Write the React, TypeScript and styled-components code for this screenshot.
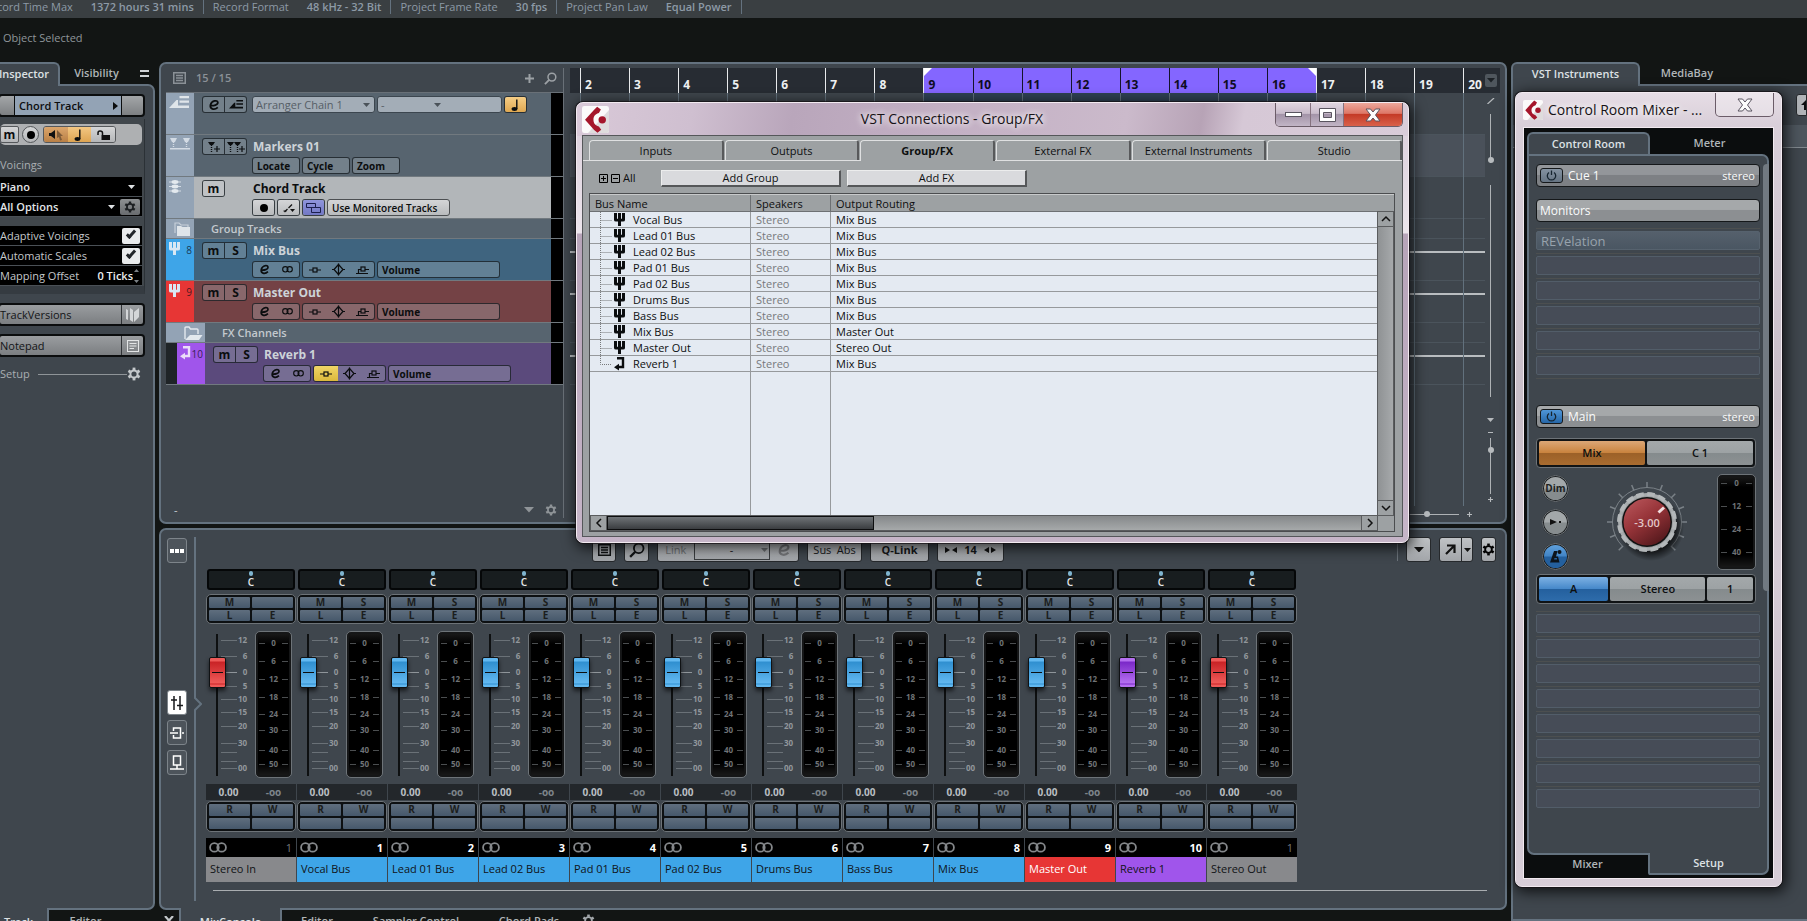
import React from "react";
import styled, { createGlobalStyle, css } from "styled-components";

const line = "#64727f";
const panel = "#3f464d";
const black = "#121514";

const GlobalStyle = createGlobalStyle`
  *, *::before, *::after { box-sizing: border-box; }
  html, body, #root { height: 100%; }
  body {
    margin: 0;
    overflow: hidden;
    background: ${black};
    font-family: "Open Sans", "Noto Sans", sans-serif;
    font-size: 11px;
    line-height: 16px;
    color: #c9ced2;
  }
  button, input, select { font: inherit; color: inherit; margin: 0; }
  button { padding: 0; border: 0; background: none; }
  svg { display: block; flex: none; }
`;

const Desktop = styled.div`
  position: relative;
  display: flex;
  flex-direction: column;
  height: 100vh;
  overflow: hidden;
`;

/* ---------- icons ---------- */

type IconProps = { c?: string; s?: number };

const Gear = ({ c = "#000", s = 14 }: IconProps) => (
  <svg width={s} height={s} viewBox="-7 -7 14 14" aria-hidden="true">
    <circle r="3.6" fill="none" stroke={c} strokeWidth="2" />
    {[0, 60, 120, 180, 240, 300].map((a) => (
      <path key={a} d="M0 -4 V-6.4" stroke={c} strokeWidth="2.8" transform={`rotate(${a})`} />
    ))}
  </svg>
);

const EIcon = ({ c = "#0b0d0f", s = 12 }: IconProps) => (
  <svg width={s} height={s} viewBox="0 0 12 12" aria-hidden="true">
    <path d="M2.4 6.6 C5.5 7 10 6 9.8 3.4 C9.4 .8 4 1.2 2.5 5.8 C1.5 10.2 6.2 11.6 9.8 8.4" fill="none" stroke={c} strokeWidth="1.8" />
  </svg>
);

const StereoRings = ({ c = "#0b0d0f", w = 10 }: { c?: string; w?: number }) => (
  <svg width={w} height={w * 0.6} viewBox="0 0 20 12" aria-hidden="true">
    <circle cx="6" cy="6" r="4.8" fill="none" stroke={c} strokeWidth="2" />
    <circle cx="14" cy="6" r="4.8" fill="none" stroke={c} strokeWidth="2" />
  </svg>
);

const Fork = ({ c = "#0b0d0f" }: IconProps) => (
  <svg width="11" height="13" viewBox="0 0 11 13" aria-hidden="true">
    <path d="M0 0H3V5Q3 6 4 6V0H7V6Q8 6 8 5V0H11V7Q11 8.500 9 8.500H7V13H4V8.500H2Q0 8.500 0 7Z" fill={c} />
  </svg>
);

const ReturnArrow = ({ c = "#0b0d0f" }: IconProps) => (
  <svg width="11" height="14" viewBox="0 0 11 14" aria-hidden="true">
    <path d="M3 1.200H9V10H4" fill="none" stroke={c} strokeWidth="2.400" />
    <path d="M0 10.200L5 6.800V13.600Z" fill={c} />
  </svg>
);

const Arranger = ({ c = "#0b0d0f", w = 14 }: { c?: string; w?: number }) => (
  <svg width={w} height={w * 0.6} viewBox="0 0 20 12" aria-hidden="true">
    <path d="M0 12L7.500 4H9V9.500H20V12Z M10.500 0H20V2.200H10.500Z M10.500 4.600H20V6.800H10.500Z" fill={c} />
  </svg>
);

const MarkerPins = ({ c = "#d3dbe4" }: IconProps) => (
  <svg width="22" height="12" viewBox="0 0 22 12" aria-hidden="true">
    <path d="M1 0H8L6 4H3Z M14 0H21L19 4H16Z M1 10H21V11.500H1Z" fill={c} />
    <path d="M4.500 4V10 M17.500 4V10" stroke={c} strokeWidth="1.400" strokeDasharray="1 1" />
  </svg>
);

const PinPlus = ({ two = false }: { two?: boolean }) => (
  <svg width={two ? 18 : 13} height="10" viewBox={two ? "0 0 18 10" : "0 0 13 10"} aria-hidden="true">
    <path d={two ? "M0 0H7L5 3H2Z M7 0H14L12 3H9Z" : "M1 0H8L6 3H3Z"} fill="#0b0d0f" />
    <path d={two ? "M3.500 3V10 M10.500 3V10" : "M4.500 3V10"} stroke="#0b0d0f" strokeDasharray="1 1" strokeWidth="1.400" />
    <path d={two ? "M12 7H18 M15 4V10" : "M7 7H13 M10 4V10"} stroke="#0b0d0f" strokeWidth="1.200" />
  </svg>
);

const ChordIcon = () => (
  <svg width="12" height="13" viewBox="0 0 12 13" aria-hidden="true">
    <path d="M0 2H12 M0 6.500H12 M0 11H12" stroke="#d3dbe4" strokeWidth="1" />
    <ellipse cx="6" cy="2" rx="3.400" ry="1.900" fill="#e3e9ee" />
    <ellipse cx="6" cy="6.500" rx="3.400" ry="1.900" fill="#e3e9ee" />
    <ellipse cx="6" cy="11" rx="3.400" ry="1.900" fill="#e3e9ee" />
  </svg>
);

const Folder = ({ open = false }: { open?: boolean }) => (
  <svg width="19" height="15" viewBox="0 0 19 15" aria-hidden="true">
    {open ? (
      <>
        <path d="M1 13V2Q1 1 2 1H5L6.500 3H13Q14 3 14 4V8" fill="none" stroke="#e3e9ee" strokeWidth="1.400" />
        <path d="M1 14L6 9H18.500L15 14Z" fill="#e3e9ee" />
      </>
    ) : (
      <>
        <path d="M2 11V1H6L8 3H15V5" fill="none" stroke="#c7d0da" strokeWidth="1.200" />
        <path d="M4 14V4H8L9.500 5H17V14Z" fill="#dfe5ea" />
      </>
    )}
  </svg>
);

const Note = () => (
  <svg width="10" height="12" viewBox="0 0 10 12" aria-hidden="true">
    <ellipse cx="3.500" cy="10" rx="2.900" ry="1.900" fill="#0b0d0f" />
    <path d="M5.800 10V0.500" stroke="#0b0d0f" strokeWidth="1.400" />
  </svg>
);

const InsertIcon = () => (
  <svg width="12" height="6" viewBox="0 0 12 6" aria-hidden="true">
    <path d="M0 3H4 M8 3H12" stroke="#0b0d0f" strokeWidth="1.200" />
    <rect x="4" y="1" width="4" height="4" fill="none" stroke="#0b0d0f" strokeWidth="1.200" />
  </svg>
);
const EqIcon = () => (
  <svg width="13" height="13" viewBox="0 0 13 13" aria-hidden="true">
    <path d="M6.500 0.500V12.500 M0 6.500H2 M11 6.500H13" stroke="#0b0d0f" strokeWidth="1.200" />
    <path d="M2 6.500L6.500 1.500L11 6.500L6.500 11.500Z" fill="none" stroke="#0b0d0f" strokeWidth="1.200" />
  </svg>
);
const SendIcon = () => (
  <svg width="13" height="8" viewBox="0 0 13 8" aria-hidden="true">
    <path d="M0 7.500H12 M2.500 7V3.500H5 M9 3.500H13" fill="none" stroke="#0b0d0f" strokeWidth="1.200" />
    <rect x="5" y="1" width="4" height="4" fill="none" stroke="#0b0d0f" strokeWidth="1.200" />
  </svg>
);

const Search = ({ c = "#9ca1a5", s = 14 }: IconProps) => (
  <svg width={s} height={s} viewBox="0 0 14 14" aria-hidden="true">
    <circle cx="8.500" cy="5.500" r="4.200" fill="none" stroke={c} strokeWidth="1.600" />
    <path d="M5.500 8.500L1 13" stroke={c} strokeWidth="2" />
  </svg>
);

const List = ({ c = "#9ca1a5" }: IconProps) => (
  <svg width="13" height="12" viewBox="0 0 13 12" aria-hidden="true">
    <rect x="0.750" y="0.750" width="11.500" height="10.500" fill="none" stroke={c} strokeWidth="1.500" />
    <path d="M3 3.500H10 M3 6H10 M3 8.500H10" stroke={c} strokeWidth="1.300" />
  </svg>
);

const Down = ({ c = "#dfe2e4", w = 7 }: { c?: string; w?: number }) => (
  <svg width={w} height={w / 2 + 0.5} viewBox="0 0 8 4" preserveAspectRatio="none" aria-hidden="true">
    <path d="M0 0H8L4 4Z" fill={c} />
  </svg>
);

const Plus = ({ c = "#9ca1a5", s = 9, w = 2 }: { c?: string; s?: number; w?: number }) => (
  <svg width={s} height={s} viewBox="0 0 9 9" aria-hidden="true">
    <path d="M4.500 0V9 M0 4.500H9" stroke={c} strokeWidth={w} />
  </svg>
);

const Power = () => (
  <svg width="11" height="11" viewBox="0 0 11 11" aria-hidden="true">
    <path d="M3 2.400A4.200 4.200 0 1 0 8 2.400 M5.500 0.500V5" fill="none" stroke="#16242f" strokeWidth="1.300" />
  </svg>
);

const Brand = ({ s }: { s: number }) => (
  <svg width={s} height={s} viewBox="0 0 80 80" aria-hidden="true">
    <rect width="80" height="80" rx="7" fill="#fbfafa" />
    <path d="M80 12V73Q80 80 73 80H18Z" fill="#dfdcdd" />
    <path d="M9 41L36 11L45 2L56 10L50 21C37 25 34 33 34 41C34 49 37 57 50 61L57 70L46 79L36 71Z" fill="#a5162b" />
    <circle cx="60" cy="41" r="11" fill="#a5162b" />
  </svg>
);

/* ---------- top lines ---------- */

const InfoLine = styled.header`
  display: flex;
  flex: none;
  height: 18px;
  margin-left: -25px;
  background: #3a3f42;
  color: #8d9aa6;
  line-height: 13px;
`;
const InfoItem = styled.div`
  display: flex;
  gap: 18px;
  height: 14px;
  padding: 0 9px;
  white-space: nowrap;
  border-right: 1px solid ${line};
  b { font-weight: 600; }
`;
const StatusLine = styled.div`
  flex: none;
  height: 44px;
  padding: 12px 3px;
  color: #8f959a;
`;

/* ---------- page columns and tabbed panels ---------- */

const Main = styled.main`
  flex: 1;
  min-height: 0;
  display: grid;
  grid-template-columns: 155px minmax(0, 1fr) 296px;
  gap: 4px;
`;
const Column = styled.div<{ $shift?: boolean }>`
  display: flex;
  flex-direction: column;
  min-width: 0;
  min-height: 0;
  ${(p) => p.$shift && css`margin-left: -12px;`}
`;
const Tabs = styled.div`
  display: flex;
  flex: none;
  height: 22px;
`;
const Tab = styled.button<{ $on?: boolean; $w: number; $low?: boolean }>`
  position: relative;
  flex: none;
  width: ${(p) => p.$w}px;
  height: 24px;
  padding-bottom: 2px;
  font-weight: 600;
  color: ${(p) => (p.$on ? "#dde1e4" : "#b0b5b8")};
  ${(p) =>
    p.$on &&
    css`
      background: ${panel};
      border: 2px solid ${line};
      ${p.$low ? "border-top: 0; border-radius: 0 0 5px 5px; margin-top: -2px; height: 26px; padding: 4px 0 0;" : "border-bottom: 0; border-radius: 6px 6px 0 0;"}
    `}
`;
const TabTools = styled.div`
  display: flex;
  align-items: center;
  margin-left: auto;
  padding-right: 6px;
`;
const Panel = styled.section<{ $grow?: boolean; $edge?: boolean }>`
  display: flex;
  flex-direction: column;
  min-height: 0;
  background: ${panel};
  border: 2px solid ${line};
  border-radius: 7px;
  ${(p) => p.$grow && css`flex: 1;`}
  ${(p) => p.$edge && css`border-right: 0; border-radius: 0;`}
`;
const Footer = styled.div`
  display: flex;
  flex: none;
  height: 24px;
  margin-bottom: -13px;
`;
const CloseMark = styled.button`
  width: 20px;
  height: 20px;
  display: grid;
  place-items: center;
`;

/* ---------- inspector ---------- */

const InspBody = styled.div`
  display: flex;
  flex-direction: column;
  padding: 8px 8px 0;
`;
const HeadBar = styled.div`
  display: flex;
  height: 23px;
  border: 2px solid #0b0d0e;
  border-radius: 4px;
  background: linear-gradient(#a3a6a8, #7d8083);
`;
const HeadName = styled.button`
  flex: 1;
  display: flex;
  align-items: center;
  justify-content: space-between;
  margin: 0 21px 0 14px;
  padding: 0 3px 0 4px;
  background: #93a3b5;
  border: solid #0b0d0e;
  border-width: 0 1px;
  color: #0b0d0e;
  font-weight: 600;
`;
const InspCard = styled.div`
  margin: 2px 0 9px;
  padding: 5px 2px 0 2px;
  border-right: 1px solid #2b3136;
  border-bottom: 8px solid #353b41;
  background: #41474c;
`;
const ToolBar = styled.div`
  display: flex;
  align-items: center;
  gap: 3px;
  height: 21px;
  background: #aeb0b2;
  border-radius: 5px;
`;
const cellLook = css`
  display: grid;
  place-items: center;
  background: linear-gradient(#d5d6d7, #b4b6b8);
`;
const SmallKey = styled.button<{ $round?: boolean }>`
  ${cellLook}
  width: ${(p) => (p.$round ? 17 : 19)}px;
  height: 17px;
  border: 1px solid #55585b;
  border-radius: ${(p) => (p.$round ? 9 : 2)}px;
  font-weight: 700;
  font-size: 12px;
  line-height: 12px;
  color: #0b0d0e;
`;
const KeyTrio = styled.div`
  display: grid;
  grid-template-columns: 1fr 1fr 1fr;
  width: 73px;
  height: 17px;
  margin-left: 1px;
  border: 1px solid #55585b;
  border-radius: 3px;
  overflow: hidden;
`;
const TrioKey = styled.button<{ $bg?: string }>`
  ${cellLook}
  ${(p) => p.$bg && css`background: ${p.$bg};`}
`;
const Caption = styled.div`
  height: 32px;
  padding: 12px 0 0 0;
  color: #a9aeb2;
`;
const BlackList = styled.div`
  background: #000;
  & + & { margin-top: 9px; }
`;
const BlackRow = styled.label`
  display: flex;
  align-items: center;
  justify-content: space-between;
  height: 20px;
  padding-right: 2px;
  border-bottom: 1px solid #4a5056;
  color: #c4c8cb;
  white-space: nowrap;
`;
const Stack = styled.span<{ $w?: number; $h?: number; $pad?: number }>`
  display: grid;
  align-items: center;
  ${(p) => (p.$w ? css`width: ${p.$w}px;` : css`flex: 1;`)}
  ${(p) => p.$h && css`height: ${p.$h}px;`}
  > * { grid-area: 1 / 1; }
  > svg { justify-self: end; margin-right: ${(p) => p.$pad ?? 5}px; pointer-events: none; }
`;
const BlackSelect = styled.select`
  appearance: none;
  width: 100%;
  height: 18px;
  padding: 0;
  border: 0;
  background: none;
  color: #e3e6e8;
  font-weight: 600;
  option { color: #000; }
`;
const GearKey = styled.button`
  width: 20px;
  height: 16px;
  display: grid;
  place-items: center;
  border-radius: 2px;
  background: linear-gradient(#8d9092, #696c6f);
`;
const Check = styled.input`
  appearance: none;
  width: 18px;
  height: 16px;
  border-radius: 2px;
  background: #e9ebec;
  display: grid;
  place-items: center;
  &::after {
    content: "";
    width: 10px;
    height: 5px;
    border: solid #22262a;
    border-width: 0 0 3px 3px;
    transform: translateY(-2px) rotate(-48deg);
  }
`;
const Ticks = styled.input`
  width: 48px;
  padding: 0;
  margin-left: auto;
  border: 0;
  background: none;
  color: #eceeef;
  font-weight: 600;
  text-align: right;
`;
const GrayBar = styled.button`
  display: flex;
  align-items: center;
  justify-content: space-between;
  height: 23px;
  margin-bottom: 8px;
  border: 2px solid #0b0d0e;
  border-radius: 4px;
  background: linear-gradient(#9a9da0, #7b7e81);
  color: #131517;
  span { width: 22px; height: 100%; border-left: 1px solid #303336; display: grid; place-items: center; }
`;
const SetupRow = styled.div`
  display: flex;
  align-items: center;
  gap: 8px;
  height: 18px;
  padding: 0 4px 0 2px;
  color: #a9aeb2;
  i { flex: 1; height: 1px; background: #8f9498; }
  svg { margin-left: -8px; }
`;

function Inspector() {
  return (
    <Column $shift>
      <Tabs>
        <Tab $on $w={72}>Inspector</Tab>
        <Tab $w={73}>Visibility</Tab>
        <TabTools>
          <svg width="9" height="7" viewBox="0 0 9 7" aria-hidden="true"><path d="M0 1H9 M0 6H9" stroke="#cfd3d6" strokeWidth="2" /></svg>
        </TabTools>
      </Tabs>
      <Panel $grow>
        <InspBody>
          <HeadBar>
            <HeadName>
              Chord Track
              <svg width="5" height="8" viewBox="0 0 5 8" aria-hidden="true"><path d="M0 0L5 4L0 8Z" fill="#0b0d0e" /></svg>
            </HeadName>
          </HeadBar>
          <InspCard>
            <ToolBar>
              <SmallKey>m</SmallKey>
              <SmallKey $round aria-label="Record enable">
                <svg width="8" height="8" viewBox="0 0 8 8"><circle cx="4" cy="4" r="4" fill="#000" /></svg>
              </SmallKey>
              <KeyTrio>
                <TrioKey $bg="linear-gradient(#dba56b,#b98046)" aria-label="Acoustic feedback">
                  <svg width="14" height="12" viewBox="0 0 14 12"><path d="M0 4H2L6 1V10L2 7H0Z" fill="#111" /><path d="M8 1L14 7L11.500 7L13 11L11 11.500L10 8L8 9Z" fill="#7d5b39" /></svg>
                </TrioKey>
                <TrioKey $bg="linear-gradient(#f3c783,#dda452)" aria-label="Musical mode"><Note /></TrioKey>
                <TrioKey aria-label="Lock">
                  <svg width="13" height="10" viewBox="0 0 13 10"><path d="M1 5V3Q1 1 3 1Q5.500 1 5.500 3V5" fill="none" stroke="#111" strokeWidth="1.500" /><path d="M4.500 5H13V10H4.500Z" fill="#111" /></svg>
                </TrioKey>
              </KeyTrio>
            </ToolBar>
            <Caption>Voicings</Caption>
            <BlackList>
              <BlackRow>
                <Stack>
                  <BlackSelect aria-label="Voicing library"><option>Piano</option></BlackSelect>
                  <Down />
                </Stack>
              </BlackRow>
              <BlackRow as="div">
                <Stack>
                  <BlackSelect aria-label="Voicing options"><option>All Options</option></BlackSelect>
                  <Down />
                </Stack>
                <GearKey aria-label="Configure voicings"><Gear c="#1c1f22" s={12} /></GearKey>
              </BlackRow>
            </BlackList>
            <BlackList>
              <BlackRow>Adaptive Voicings<Check type="checkbox" defaultChecked /></BlackRow>
              <BlackRow>Automatic Scales<Check type="checkbox" defaultChecked /></BlackRow>
              <BlackRow>
                Mapping Offset
                <Ticks defaultValue="0 Ticks" />
                <svg width="7" height="14" viewBox="0 0 7 14" aria-hidden="true"><path d="M1 3L3.500 0L6 3Z M1 11L3.500 14L6 11Z" fill="#7b8186" /></svg>
              </BlackRow>
            </BlackList>
          </InspCard>
          <GrayBar>
            TrackVersions
            <span>
              <svg width="13" height="14" viewBox="0 0 13 14" aria-hidden="true"><path d="M0 1L2 2V12L0 11Z M4 0L7 2V14L4 12Z M8 4L13 0V9L8 14Z" fill="#d4d6d8" /></svg>
            </span>
          </GrayBar>
          <GrayBar>
            Notepad
            <span>
              <svg width="12" height="12" viewBox="0 0 12 12" aria-hidden="true"><rect x="0.500" y="0.500" width="11" height="11" fill="none" stroke="#e3e5e6" /><path d="M2.500 3.500H9.500 M2.500 6H9.500 M2.500 8.500H7" stroke="#e3e5e6" /></svg>
            </span>
          </GrayBar>
          <SetupRow>Setup<i /><Gear c="#c5c9cc" s={14} /></SetupRow>
        </InspBody>
      </Panel>
      <Footer>
        <Tab $on $low $w={61}>Track</Tab>
        <Tab $w={73}>Editor</Tab>
      </Footer>
    </Column>
  );
}

/* ---------- track list ---------- */

const Project = styled.div`
  display: flex;
  flex: 1;
  min-height: 0;
  padding: 4px 5px 4px 5px;
`;
const TrackList = styled.div`
  display: flex;
  flex-direction: column;
  flex: none;
  width: 398px;
  border-right: 1px solid #697077;
`;
const ListHead = styled.div`
  display: flex;
  align-items: center;
  gap: 10px;
  height: 25px;
  padding: 0 6px 4px 7px;
  border-bottom: 1px solid #697077;
  color: #8b9197;
  font-weight: 600;
  button:first-of-type { margin-left: auto; }
`;
const ListFoot = styled.div`
  display: flex;
  align-items: center;
  gap: 11px;
  margin-top: auto;
  padding: 0 6px 0 8px;
  color: #c9ced2;
  span { margin-right: auto; }
`;
const Track = styled.div<{ $bg: string; $h?: number; $indent?: boolean }>`
  display: flex;
  flex: none;
  height: ${(p) => p.$h ?? 42}px;
  padding-left: ${(p) => (p.$indent ? 11 : 0)}px;
  border-bottom: 1px solid #71797f;
  background: ${(p) => (p.$indent ? "linear-gradient(90deg, #1f2427 11px, #000 11px)" : "#000")};
  > :nth-child(2) { background: ${(p) => p.$bg}; }
`;
const Swatch = styled.div<{ $c: string; $w?: number }>`
  display: flex;
  justify-content: space-between;
  width: ${(p) => p.$w ?? 28}px;
  padding: 3px 2px 0 3px;
  background: ${(p) => p.$c};
  color: rgba(10, 15, 25, 0.75);
  font-size: 10px;
`;
const TrackBody = styled.div`
  flex: 1;
  margin-right: 12px;
  padding: 3px 8px 0;
  display: grid;
  grid-template-columns: 50px 1fr;
  grid-template-rows: 17px 17px;
  row-gap: 2px;
`;
const FolderName = styled.div`
  flex: 1;
  margin-right: 12px;
  padding: 2px 17px;
  font-weight: 600;
  color: #c3c9ce;
`;
const TrackName = styled.div<{ $dark?: boolean }>`
  padding-left: 1px;
  font-weight: 700;
  font-size: 12px;
  line-height: 17px;
  color: ${(p) => (p.$dark ? "#0b0d0e" : "#cdd3d8")};
`;
const Controls = styled.div`
  grid-column: 2;
  display: flex;
  gap: 2px;
`;
const Group = styled.div<{ $w: number; $split?: boolean }>`
  display: flex;
  width: ${(p) => p.$w}px;
  height: 17px;
  border: 1px solid rgba(15, 20, 25, 0.75);
  border-radius: 3px;
  background: rgba(190, 200, 210, 0.28);
  overflow: hidden;
  ${(p) => p.$split && css`button + button { border-left: 1px solid rgba(15, 20, 25, 0.75); }`}
`;
const Cell = styled.button<{ $bg?: string }>`
  flex: 1;
  display: grid;
  place-items: center;
  font-weight: 700;
  font-size: 12px;
  line-height: 13px;
  color: #0b0d0e;
  background: ${(p) => p.$bg ?? "none"};
`;
const TextKey = styled.button<{ $w: number; $light?: boolean }>`
  width: ${(p) => p.$w}px;
  height: 17px;
  padding: 0 4px;
  border: 1px solid ${(p) => (p.$light ? "#4c4f52" : "rgba(15, 20, 25, 0.75)")};
  border-radius: 3px;
  background: ${(p) => (p.$light ? "linear-gradient(#d4d5d7,#b9bbbd)" : "rgba(190, 200, 210, 0.28)")};
  font-weight: ${(p) => (p.$light ? 600 : 700)};
  font-size: 10px;
  line-height: 14px;
  text-align: left;
  white-space: nowrap;
  color: #0b0d0e;
`;
const ChainSelect = styled.select`
  appearance: none;
  width: 100%;
  height: 17px;
  padding: 0 3px;
  border: 1px solid #3c464f;
  border-radius: 3px;
  background: #a3adb7;
  color: #565e66;
  line-height: 14px;
`;

const dim = "#93a3b5";
const light = "linear-gradient(#d4d5d7,#b9bbbd)";

function BusControls({ on }: { on?: boolean }) {
  return (
    <Controls>
      <Group $w={48}>
        <Cell aria-label="Edit"><EIcon s={11} /></Cell>
        <Cell aria-label="Stereo"><StereoRings w={11} /></Cell>
      </Group>
      <Group $w={73}>
        <Cell aria-label="Inserts" $bg={on ? "linear-gradient(#f0d566,#dbb83c)" : undefined}><InsertIcon /></Cell>
        <Cell aria-label="EQ"><EqIcon /></Cell>
        <Cell aria-label="Sends"><SendIcon /></Cell>
      </Group>
      <TextKey $w={123}>Volume</TextKey>
    </Controls>
  );
}

function Tracks() {
  return (
    <TrackList>
      <ListHead>
        <List c="#8b9197" />
        15 / 15
        <button aria-label="Add track"><Plus /></button>
        <button aria-label="Find tracks"><Search s={13} /></button>
      </ListHead>
      <Track $bg="#57646f">
        <Swatch $c={dim}><Arranger c="#dfe5ea" w={20} /></Swatch>
        <TrackBody>
          <Group $w={45} $split>
            <Cell aria-label="Edit"><EIcon /></Cell>
            <Cell aria-label="Arranger"><Arranger /></Cell>
          </Group>
          <Controls>
            <Stack $w={123} $h={17}>
              <ChainSelect aria-label="Arranger chain"><option>Arranger Chain 1</option></ChainSelect>
              <Down c="#4a5259" />
            </Stack>
            <Stack $w={125} $h={17} $pad={61}>
              <ChainSelect aria-label="Chain step"><option>-</option></ChainSelect>
              <Down c="#4a5259" />
            </Stack>
            <Group $w={23}><Cell aria-label="Musical" $bg="linear-gradient(#f5cd86,#dfa851)"><Note /></Cell></Group>
          </Controls>
        </TrackBody>
      </Track>
      <Track $bg="#57646f">
        <Swatch $c={dim}><MarkerPins /></Swatch>
        <TrackBody>
          <Group $w={45} $split>
            <Cell aria-label="Add marker"><PinPlus /></Cell>
            <Cell aria-label="Add cycle marker"><PinPlus two /></Cell>
          </Group>
          <TrackName>Markers 01</TrackName>
          <Controls>
            <TextKey $w={48}>Locate</TextKey>
            <TextKey $w={48}>Cycle</TextKey>
            <TextKey $w={48}>Zoom</TextKey>
          </Controls>
        </TrackBody>
      </Track>
      <Track $bg="#b2b6b9">
        <Swatch $c={dim}><ChordIcon /></Swatch>
        <TrackBody>
          <Group $w={23}><Cell $bg="#bfc2c5">m</Cell></Group>
          <TrackName $dark>Chord Track</TrackName>
          <Controls>
            <Group $w={23}><Cell aria-label="Record" $bg={light}><svg width="8" height="8" viewBox="0 0 8 8"><circle cx="4" cy="4" r="4" fill="#000" /></svg></Cell></Group>
            <Group $w={23}><Cell aria-label="Auto write" $bg={light}><svg width="12" height="10" viewBox="0 0 12 10"><path d="M1.500 9L4.500 6" stroke="#111" strokeWidth="1.200" /><path d="M5.500 5L9 1.500" stroke="#111" strokeWidth="1.200" /><path d="M0.500 8H3.500" stroke="#111" /><path d="M7 6H12L9.500 9Z" fill="#111" /></svg></Cell></Group>
            <Group $w={23}><Cell aria-label="Show scales" $bg="linear-gradient(#8f95dc,#7278c4)"><svg width="15" height="10" viewBox="0 0 15 10"><path d="M0.500 0.500H9.500V4.500H0.500Z M5.500 4.500H14.500V9.500H5.500Z" fill="none" stroke="#1b1f4d" /></svg></Cell></Group>
            <TextKey $w={123} $light>Use Monitored Tracks</TextKey>
          </Controls>
        </TrackBody>
      </Track>
      <Track $bg="#57646f" $h={20}>
        <Swatch $c={dim}><span /><Folder /></Swatch>
        <FolderName>Group Tracks</FolderName>
      </Track>
      {[
        { n: 8, name: "Mix Bus", c: "#3ea5e8", bg: "#3f647f" },
        { n: 9, name: "Master Out", c: "#e73635", bg: "#744245" },
      ].map((t) => (
        <Track key={t.n} $bg={t.bg}>
          <Swatch $c={t.c}><Fork c="#d9e8f4" />{t.n}</Swatch>
          <TrackBody>
            <Group $w={45} $split><Cell>m</Cell><Cell>S</Cell></Group>
            <TrackName>{t.name}</TrackName>
            <BusControls />
          </TrackBody>
        </Track>
      ))}
      <Track $bg="#57646f" $h={20}>
        <Swatch $c={dim} $w={39}><span /><Folder open /></Swatch>
        <FolderName>FX Channels</FolderName>
      </Track>
      <Track $bg="#5b4a7c" $indent>
        <Swatch $c="#a055eb"><ReturnArrow c="#eadcf8" />10</Swatch>
        <TrackBody>
          <Group $w={45} $split><Cell>m</Cell><Cell>S</Cell></Group>
          <TrackName>Reverb 1</TrackName>
          <BusControls on />
        </TrackBody>
      </Track>
      <ListFoot>
        <span>-</span>
        <Down c="#8f9498" w={10} />
        <Gear c="#8f9498" s={12} />
      </ListFoot>
    </TrackList>
  );
}

/* ---------- timeline ---------- */

const Timeline = styled.div`
  flex: 1;
  display: flex;
  flex-direction: column;
  padding-left: 6px;
`;
const Ruler = styled.div`
  display: flex;
  flex: none;
  height: 25px;
  padding-left: 10px;
  background: #272c33;
  font-size: 12px;
  font-weight: 700;
`;
const Bar = styled.div<{ $sel?: boolean; $last?: boolean; $mark?: "l" | "r" }>`
  position: relative;
  ${(p) => (p.$last ? css`flex: none; width: 37px;` : css`flex: 1;`)}
  padding: 9px 0 0 4px;
  border-left: 1px solid ${(p) => (p.$sel && p.$mark !== "l" ? "#15132b" : "#e8eaec")};
  background: ${(p) => (p.$sel ? "#8466ff" : "none")};
  color: ${(p) => (p.$sel ? "#0e0c22" : "#eef0f1")};
  &::before {
    content: ${(p) => (p.$mark ? '""' : "none")};
    position: absolute;
    top: 0;
    ${(p) => (p.$mark === "r" ? "right: 0;" : "left: 0;")}
    border-top: 8px solid #fff;
    ${(p) => (p.$mark === "r" ? "border-left: 8px solid transparent;" : "border-right: 8px solid transparent;")}
  }
`;
const RulerMenu = styled.button`
  position: absolute;
  right: 3px;
  top: 6px;
  width: 12px;
  height: 13px;
  display: grid;
  place-items: center;
  background: #4f565d;
  border-radius: 2px;
`;
const Arrange = styled.div`
  flex: 1;
  display: flex;
  min-height: 0;
`;
const Lanes = styled.div`
  position: relative;
  flex: 1;
  margin-bottom: 12px;
`;
const Lane = styled.div<{ $h?: number; $hot?: boolean; $event?: boolean }>`
  height: ${(p) => p.$h ?? 42}px;
  padding-top: 12px;
  border-bottom: 1px solid #4b545c;
  background: ${(p) => (p.$hot ? "#4a515a" : "none")};
  &::before {
    content: ${(p) => (p.$event ? '""' : "none")};
    display: block;
    height: 2px;
    background: #b9bdc0;
  }
`;
const GridLines = styled.div`
  position: absolute;
  inset: 0;
  display: flex;
  padding-left: 10px;
`;
const GridLine = styled.i<{ $sel?: boolean; $last?: boolean }>`
  ${(p) => (p.$last ? css`flex: none; width: 22px;` : css`flex: 1;`)}
  border-left: 1px solid #62717d;
  background: ${(p) => (p.$sel ? "rgba(25, 60, 95, 0.4)" : "none")};
`;
const Gutter = styled.div`
  display: flex;
  flex-direction: column;
  align-items: center;
  flex: none;
  width: 15px;
  padding: 5px 4px 16px 0;
`;
const VZoom = styled.input<{ $h?: number; $bare?: boolean }>`
  appearance: none;
  writing-mode: vertical-lr;
  width: 9px;
  ${(p) => (p.$h ? css`height: ${p.$h}px; flex: none;` : css`flex: 1; min-height: 0;`)}
  background: linear-gradient(#aeb2b5, #aeb2b5) center / 1px 100% no-repeat;
  &::-webkit-slider-thumb {
    appearance: none;
    width: 6px;
    height: 6px;
    border-radius: 3px;
    background: ${(p) => (p.$bare ? "none" : "#b6babd")};
  }
`;
const Space = styled.i<{ $h: number }>`
  flex: none;
  height: ${(p) => p.$h}px;
`;
const Dash = styled.i`
  flex: none;
  width: 5px;
  height: 1px;
  background: #b6babd;
`;
const HZoomRow = styled.div`
  display: flex;
  align-items: center;
  justify-content: flex-end;
  gap: 8px;
  height: 8px;
  margin-top: -8px;
  padding-right: 28px;
`;
const HZoom = styled.input`
  appearance: none;
  width: 60px;
  height: 7px;
  background: linear-gradient(#aeb2b5, #aeb2b5) center / 100% 1px no-repeat;
  &::-webkit-slider-thumb {
    appearance: none;
    width: 6px;
    height: 6px;
    border-radius: 3px;
    background: #b6babd;
  }
`;

const bars = Array.from({ length: 18 }, (_, i) => i + 2);

function TimelineView() {
  const sel = (b: number) => b >= 9 && b < 17;
  return (
    <Timeline>
      <Ruler>
        {bars.map((b) => (
          <Bar key={b} $sel={sel(b)} $mark={b === 9 ? "l" : b === 16 ? "r" : undefined}>{b}</Bar>
        ))}
        <Bar $last>20<RulerMenu aria-label="Ruler format"><Down c="#1c2126" w={8} /></RulerMenu></Bar>
      </Ruler>
      <Arrange>
        <Lanes>
          <Lane />
          <Lane $hot />
          <Lane />
          <Lane $h={20} />
          <Lane $event />
          <Lane $event />
          <Lane $h={20} />
          <Lane $event />
          <GridLines>
            {bars.map((b) => <GridLine key={b} $sel={sel(b)} />)}
            <GridLine $last />
          </GridLines>
        </Lanes>
        <Gutter>
          <svg width="8" height="6" viewBox="0 0 8 6" aria-hidden="true"><path d="M0.500 6L7 0" stroke="#b6babd" strokeWidth="1.200" /></svg>
          <Space $h={10} />
          <VZoom type="range" $h={49} aria-label="Waveform zoom" defaultValue={100} />
          <Space $h={22} />
          <VZoom type="range" $bare aria-label="Scroll tracks" defaultValue={0} />
          <Space $h={21} />
          <Down c="#b6babd" w={7} />
          <Space $h={10} />
          <Dash />
          <Space $h={5} />
          <VZoom type="range" $h={56} aria-label="Vertical zoom" defaultValue={18} />
          <Space $h={3} />
          <Plus c="#b6babd" s={5} />
        </Gutter>
      </Arrange>
      <HZoomRow>
        <HZoom type="range" aria-label="Horizontal zoom" defaultValue={46} />
        <Plus c="#b6babd" s={5} />
      </HZoomRow>
    </Timeline>
  );
}

/* ---------- mix console ---------- */

const Console = styled.div`
  display: flex;
  padding: 7px 9px 7px 6px;
`;
const Rail = styled.nav`
  display: flex;
  flex-direction: column;
  gap: 5px;
  width: 27px;
  padding-top: 1px;
  > :nth-child(2) { margin-top: 122px; }
`;
const RailKey = styled.button<{ $on?: boolean }>`
  width: 20px;
  height: 25px;
  display: grid;
  place-items: center;
  border: 1px solid #7d848a;
  border-radius: 3px;
  background: ${(p) => (p.$on ? "#fff" : "#4d545b")};
`;
const RailLine = styled.svg`
  width: 8px;
  height: auto;
  align-self: stretch;
`;
const ConsoleBody = styled.div`
  flex: 1;
  min-width: 0;
  display: flex;
  flex-direction: column;
  gap: 8px;
  padding-left: 4px;
`;
const MixTools = styled.div`
  display: flex;
  gap: 8px;
  height: 24px;
  padding-left: 386px;
`;
const MixKey = styled.div<{ $w: number }>`
  display: flex;
  align-items: center;
  justify-content: space-evenly;
  width: ${(p) => p.$w}px;
  height: 25px;
  border: 1px solid #26292c;
  border-radius: 3px;
  background: linear-gradient(#bfc2c5, #a2a5a9);
  color: #17191b;
  button { height: 100%; display: grid; place-items: center; }
`;
const ToolSplit = styled.i`
  width: 1px;
  margin-left: auto;
  background: #6c747b;
`;
const LinkSelect = styled.select`
  appearance: none;
  width: 76px;
  height: 20px;
  border: 1px solid #3b3e41;
  background: none;
  text-align: center;
`;
const SplitKey = styled.button<{ $w: number; $line?: boolean }>`
  width: ${(p) => p.$w}px;
  ${(p) => p.$line && css`border-left: 1px solid #26292c;`}
`;
const Faint = styled.span`
  color: #6f7275;
`;
const Strips = styled.div`
  display: flex;
  gap: 1px;
`;
const Strip = styled.article`
  width: 90px;
  display: flex;
  flex-direction: column;
  isolation: isolate;
`;
const Pan = styled.div`
  display: flex;
  flex-direction: column;
  align-items: center;
  gap: 1px;
  height: 21px;
  margin: 0 1px 4px;
  border: 2px solid #050708;
  border-radius: 3px;
  background: #181d1f;
  color: #e6e8e9;
  font-size: 10px;
  line-height: 11px;
  font-weight: 600;
  &::before { content: ""; width: 4px; height: 6px; border-radius: 2px; background: #7fb4cf; }
`;
const KeyGrid = styled.div<{ $h: number }>`
  display: grid;
  grid-template-columns: 1fr 1fr;
  grid-template-rows: 1fr 1fr;
  gap: 2px;
  height: ${(p) => p.$h}px;
  padding: 2px;
  border: 1px solid #6d7378;
  border-radius: 5px;
  background: #0d1012;
`;
const GridKey = styled.button`
  min-height: 0;
  border-radius: 1px;
  background: linear-gradient(#5f6e7e, #46586b);
  color: #1b1d1c;
  font-size: 10px;
  line-height: 11px;
  font-weight: 700;
`;
const FaderArea = styled.div`
  display: flex;
  align-items: center;
  height: 147px;
  margin: 7px 0 6px;
  padding: 0 4px 0 2px;
`;
const Fader = styled.input<{ $a: string; $b: string }>`
  appearance: none;
  position: relative;
  z-index: 1;
  writing-mode: vertical-lr;
  direction: rtl;
  width: 18px;
  height: 142px;
  margin-right: -5px;
  background: linear-gradient(#0e1011, #0e1011) center / 2px 100% no-repeat;
  &::-webkit-slider-thumb {
    appearance: none;
    width: 17px;
    height: 31px;
    border: 1px solid #101214;
    border-radius: 2px;
    box-shadow: 0 3px 4px rgba(0, 0, 0, 0.6);
    background:
      linear-gradient(#0c0e10, #0c0e10) center / 11px 1px no-repeat,
      linear-gradient(${(p) => `${p.$b} 0 3px, ${p.$a} 4px, ${p.$b} 25px, ${p.$a} 26px, ${p.$b} 27px`});
  }
`;
const ScaleSvg = styled.svg`
  font-size: 8px;
  font-weight: 700;
  text-anchor: middle;
`;
const MeterBox = styled.div`
  margin-left: auto;
  border: 1px solid #6d7378;
  border-radius: 5px;
  background: linear-gradient(#1c1c1c, #000 12px, #000 calc(100% - 14px), #1c1c1c);
  box-shadow: inset 0 0 0 2px #151617;
`;
const Levels = styled.div`
  display: grid;
  grid-template-columns: 1fr 1fr;
  height: 16px;
  margin-bottom: 1px;
  background: #23272b;
  color: #b9bec2;
  font-size: 10px;
  font-weight: 700;
  text-align: center;
  span { color: #7e848a; }
`;
const NumberBar = styled.div<{ $dim?: boolean }>`
  display: flex;
  align-items: center;
  justify-content: space-between;
  height: 19px;
  margin-top: 6px;
  padding: 0 4px 0 3px;
  background: #000;
  color: ${(p) => (p.$dim ? "#74797d" : "#fff")};
  font-weight: ${(p) => (p.$dim ? 400 : 700)};
`;
const NameBar = styled.div<{ $c: string; $white?: boolean }>`
  height: 25px;
  padding: 4px;
  background: ${(p) => p.$c};
  color: ${(p) => (p.$white ? "#fff" : "#101316")};
`;
const BaseLine = styled.i`
  height: 1px;
  margin: 0 9px 10px 7px;
  background: #a9adb0;
`;

const faderMarks: [number, string][] = [[9, "12"], [25, "6"], [41, "0"], [55, "5"], [68, "10"], [81, "15"], [95, "20"], [112, "30"], [121, ""], [130, ""], [137, "00"]];
const meterMarks: [number, string][] = [[11, "0"], [29, "6"], [47, "12"], [65, "18"], [82, "24"], [98, "30"], [118, "40"], [132, "50"]];

function Meter({ w, h, marks }: { w: number; h: number; marks: [number, string][] }) {
  return (
    <MeterBox>
      <ScaleSvg width={w} height={h} viewBox={`0 0 ${w} ${h}`}>
        {marks.map(([y, t]) => (
          <g key={t}>
            <path d={`M3 ${y + 0.5}H9 M${w - 9} ${y + 0.5}H${w - 3}`} stroke="#4b4e50" />
            <text x={w / 2} y={y + 3} fill="#6f7376">{t}</text>
          </g>
        ))}
      </ScaleSvg>
    </MeterBox>
  );
}

const blue: [string, string] = ["#2f8fd0", "#62b8f0"];
const red: [string, string] = ["#c92326", "#ee5a58"];
const purple: [string, string] = ["#7a28c8", "#b56ff0"];
type Channel = { n: number; name: string; c: string; f: [string, string]; io?: boolean };
const channels: Channel[] = [
  { n: 1, name: "Stereo In", c: "#88898c", f: red, io: true },
  ...["Vocal Bus", "Lead 01 Bus", "Lead 02 Bus", "Pad 01 Bus", "Pad 02 Bus", "Drums Bus", "Bass Bus", "Mix Bus"].map(
    (name, i): Channel => ({ n: i + 1, name, c: "#3ea5e8", f: blue }),
  ),
  { n: 9, name: "Master Out", c: "#e73635", f: blue },
  { n: 10, name: "Reverb 1", c: "#a055eb", f: purple },
  { n: 1, name: "Stereo Out", c: "#88898c", f: red, io: true },
];

function ChannelStrip({ ch }: { ch: Channel }) {
  return (
    <Strip>
      <Pan>C</Pan>
      <KeyGrid $h={30}>
        <GridKey>M</GridKey>
        <GridKey>{ch.name === "Stereo In" ? "" : "S"}</GridKey>
        <GridKey>L</GridKey>
        <GridKey>E</GridKey>
      </KeyGrid>
      <FaderArea>
        <Fader type="range" $a={ch.f[0]} $b={ch.f[1]} defaultValue={79} aria-label={`${ch.name} level`} />
        <ScaleSvg width="28" height="147" viewBox="0 0 28 147">
          {faderMarks.map(([y, t]) => (
            <g key={y}>
              <path d={`M0 ${y + 0.5}H16`} stroke={t === "0" ? "#8f959a" : "#6a7177"} />
              <text x={t.length > 1 ? 21.5 : 24} y={y + 3} fill="#92979c">{t}</text>
            </g>
          ))}
        </ScaleSvg>
        <Meter w={35} h={145} marks={meterMarks} />
      </FaderArea>
      <Levels>0.00<span>-oo</span></Levels>
      <KeyGrid $h={31}>
        <GridKey>R</GridKey>
        <GridKey>W</GridKey>
        <GridKey aria-label="Bypass inserts" />
        <GridKey aria-label="Bypass sends" />
      </KeyGrid>
      <NumberBar $dim={ch.io}><StereoRings c="#85888b" w={18} />{ch.n}</NumberBar>
      <NameBar $c={ch.c} $white={ch.n === 9}>{ch.name}</NameBar>
    </Strip>
  );
}

function MixConsole() {
  return (
    <Console>
      <Rail>
        <RailKey aria-label="More"><svg width="14" height="4" viewBox="0 0 14 4"><path d="M0 0H4V4H0Z M5 0H9V4H5Z M10 0H14V4H10Z" fill="#fff" /></svg></RailKey>
        <RailKey $on aria-label="Faders"><svg width="12" height="14" viewBox="0 0 12 14"><path d="M3 0V14 M9 0V14 M0 4H6 M6 9.500H12" stroke="#17191b" strokeWidth="1.500" /></svg></RailKey>
        <RailKey aria-label="Inserts"><svg width="14" height="12" viewBox="0 0 14 12"><path d="M3.500 4V1H10.500V11H3.500V8 M0 6H8 M12 6H14" fill="none" stroke="#fff" strokeWidth="1.500" /></svg></RailKey>
        <RailKey aria-label="Sends"><svg width="14" height="15" viewBox="0 0 14 15"><path d="M3.500 1H10.500V10H3.500Z M7 10V14 M0 14H14" fill="none" stroke="#fff" strokeWidth="1.500" /></svg></RailKey>
      </Rail>
      <RailLine viewBox="0 0 8 364" preserveAspectRatio="none">
        <path d="M1 0V161L7 167L1 173V364" fill="none" stroke={line} strokeWidth="2" />
      </RailLine>
      <ConsoleBody>
        <MixTools>
          <MixKey $w={24}><button aria-label="Channel list"><List c="#111315" /></button></MixKey>
          <MixKey $w={25}><button aria-label="Find"><Search c="#111315" s={16} /></button></MixKey>
          <MixKey $w={142}>
            <Faint>Link</Faint>
            <Stack $w={76} $pad={2}>
              <LinkSelect aria-label="Link group"><option>-</option></LinkSelect>
              <Down c="#6d7073" />
            </Stack>
            <EIcon c="#77797c" s={14} />
          </MixKey>
          <MixKey $w={55}><button>Sus</button><button>Abs</button></MixKey>
          <MixKey $w={59}><button><b>Q-Link</b></button></MixKey>
          <MixKey $w={67}>
            <svg width="12" height="6" viewBox="0 0 12 6"><path d="M0 0L5 3L0 6Z M12 0L7 3L12 6Z" fill="#111" /></svg>
            <b>14</b>
            <svg width="12" height="6" viewBox="0 0 12 6"><path d="M5 0L0 3L5 6Z M7 0L12 3L7 6Z" fill="#111" /></svg>
          </MixKey>
          <ToolSplit />
          <MixKey $w={25}><button aria-label="Functions"><Down c="#111" w={10} /></button></MixKey>
          <MixKey $w={34}>
            <SplitKey $w={22} aria-label="Open separate window"><svg width="11" height="11" viewBox="0 0 11 11"><path d="M2 1.500H9.500V9 M9.500 1.500L1 10" fill="none" stroke="#111" strokeWidth="2.200" /></svg></SplitKey>
            <SplitKey $w={11} $line aria-label="Window menu"><Down c="#111" w={7} /></SplitKey>
          </MixKey>
          <MixKey $w={15}><button aria-label="Console setup"><Gear s={13} /></button></MixKey>
        </MixTools>
        <Strips>{channels.map((ch, i) => <ChannelStrip key={i} ch={ch} />)}</Strips>
        <BaseLine />
      </ConsoleBody>
    </Console>
  );
}

/* ---------- floating windows ---------- */

const Window = styled.section<{ $x: number; $y: number; $w: number; $h: number; $bg: string; $pad: number }>`
  position: absolute;
  z-index: 2;
  left: ${(p) => p.$x}px;
  top: ${(p) => p.$y}px;
  width: ${(p) => p.$w}px;
  height: ${(p) => p.$h}px;
  display: flex;
  flex-direction: column;
  padding: 0 ${(p) => p.$pad}px ${(p) => p.$pad}px;
  border: 1px solid #f2eaf0;
  border-radius: 7px;
  background: ${(p) => p.$bg};
  box-shadow: 0 0 0 1px rgba(20, 15, 20, 0.7), 2px 3px 14px 2px rgba(0, 0, 0, 0.75);
`;
const TitleBar = styled.div<{ $h: number }>`
  display: flex;
  align-items: center;
  flex: none;
  gap: 5px;
  height: ${(p) => p.$h}px;
  font-size: 14px;
  color: #161216;
  white-space: nowrap;
`;
const Title = styled.h2<{ $center?: boolean }>`
  flex: 1;
  margin: 0;
  font: inherit;
  text-shadow: 0 0 6px #fff, 0 0 8px #fff;
  text-align: ${(p) => (p.$center ? "center" : "left")};
  ${(p) => p.$center && css`padding-left: 20px;`}
`;
const WinButtons = styled.div`
  display: flex;
  align-self: flex-start;
  border: solid #6b5c68;
  border-width: 0 1px 1px;
  border-radius: 0 0 5px 5px;
  overflow: hidden;
`;
const WinButton = styled.button<{ $w: number; $red?: boolean; $clear?: boolean }>`
  width: ${(p) => p.$w}px;
  height: 23px;
  display: grid;
  place-items: center;
  background: ${(p) =>
    p.$red
      ? "linear-gradient(#eda79b, #dd7767 45%, #c43a26 50%, #d9614a)"
      : p.$clear
        ? "rgba(255,255,255,.25)"
        : "linear-gradient(#e0d5e0, #c9bccb 45%, #a394a8 50%, #c2b5c6)"};
  & + & { border-left: 1px solid #85727f; }
`;
const XMark = () => (
  <svg width="16" height="14" viewBox="0 0 16 14" aria-hidden="true">
    <path d="M1 1H5.500L8 4L10.500 1H15L10.500 7L15 13H10.500L8 10L5.500 13H1L5.500 7Z" fill="#fdfdfd" stroke="#5a5560" />
  </svg>
);

const GrayPane = styled.div`
  flex: 1;
  display: flex;
  flex-direction: column;
  min-height: 0;
  border: 1px solid #55575a;
  background: #9da1a3;
  color: #0d0f10;
`;
const VTabs = styled.div`
  display: flex;
  flex: none;
  height: 25px;
  padding: 4px 0 0 6px;
  gap: 1px;
  background: linear-gradient(#dfe0e1, #dfe0e1) bottom / 100% 1px no-repeat;
`;
const VTab = styled.button<{ $on?: boolean }>`
  flex: 1;
  height: ${(p) => (p.$on ? 21 : 20)}px;
  border: 1px solid #dfe0e1;
  border-right: 2px solid #58595b;
  border-bottom: 0;
  border-radius: 4px 3px 0 0;
  background: #9da1a3;
  font-weight: ${(p) => (p.$on ? 700 : 400)};
`;
const AddRow = styled.div`
  display: flex;
  align-items: center;
  gap: 6px;
  flex: none;
  height: 32px;
  padding: 2px 0 0 16px;
`;
const TreeAll = styled.div`
  display: flex;
  align-items: center;
  gap: 3px;
  width: 56px;
`;
const AddKey = styled.button`
  width: 180px;
  height: 17px;
  border: 1px solid;
  border-width: 1px 2px 2px 1px;
  border-color: #eceded #555759 #555759 #eceded;
  background: #d9dadd;
  line-height: 14px;
`;
const TableFrame = styled.div`
  position: relative;
  flex: 1;
  min-height: 0;
  display: flex;
  flex-direction: column;
  margin: 0 7px 4px 6px;
  border: 1px solid #4b4d4f;
`;
const BusTable = styled.table`
  flex: 1;
  width: 100%;
  border-spacing: 0;
  table-layout: fixed;
  background: #e4eaf2;
  border-top: 1px solid #c8cacb;
  th {
    height: 17px;
    padding: 0 0 0 5px;
    background: #9da1a3;
    border-right: 1px solid #6d7073;
    border-bottom: 1px solid #6d7073;
    font-weight: 400;
    text-align: left;
    line-height: 15px;
  }
  td {
    height: 16px;
    padding: 0 0 0 5px;
    border-right: 1px solid #96999c;
    border-bottom: 1px solid #96999c;
    line-height: 15px;
    white-space: nowrap;
  }
  td:nth-child(2) { color: #77797c; }
  td:last-child, th:last-child { border-right: 0; }
  tfoot td { height: 143px; border-bottom: 0; }
`;
const BusName = styled.div`
  display: flex;
  align-items: center;
  gap: 1px;
  margin-left: -5px;
  height: 15px;
`;
const VBar = styled.div`
  position: absolute;
  top: 17px;
  right: 0;
  bottom: 15px;
  width: 17px;
  display: flex;
  flex-direction: column;
  justify-content: space-between;
  border: 1px solid #5a5c5e;
  background: linear-gradient(90deg, #8f9294, #a6a9ab);
`;
const HBar = styled.div`
  display: flex;
  flex: none;
  height: 16px;
  margin-right: 16px;
  border: 1px solid #5a5c5e;
  background: linear-gradient(#85888a, #a6a9aa);
`;
const BarKey = styled.button<{ $push?: boolean }>`
  width: 15px;
  height: 14px;
  display: grid;
  place-items: center;
  background: #9da1a3;
  outline: 1px solid #5a5c5e;
  ${(p) => p.$push && css`margin-left: auto;`}
`;
const Thumb = styled.div`
  width: 34%;
  margin-left: 1px;
  border: 1px solid #0d0e0f;
  background: linear-gradient(#6f7377, #3a3d40);
`;

const Tree = ({ last }: { last: boolean }) => (
  <svg width="22" height="16" viewBox="0 0 22 16" aria-hidden="true">
    <path d={last ? "M10.500 0V8.500H22" : "M10.500 0V16 M10.500 8.500H22"} fill="none" stroke="#77797b" strokeDasharray="1 1" />
  </svg>
);
const Chevron = ({ d }: { d: string }) => (
  <svg width="10" height="10" viewBox="0 0 10 10" aria-hidden="true"><path d={d} fill="none" stroke="#111" strokeWidth="1.500" /></svg>
);
const Box = ({ plus }: { plus?: boolean }) => (
  <svg width="9" height="9" viewBox="0 0 9 9" aria-hidden="true">
    <path d={`M0.500 0.500H8.500V8.500H0.500Z M2 4.500H7 ${plus ? "M4.500 2V7" : ""}`} fill="none" stroke="#000" />
  </svg>
);
const IconSlot = styled.span`
  width: 19px;
  padding-left: 1px;
`;

const buses: [string, string][] = [
  ["Vocal Bus", "Mix Bus"],
  ["Lead 01 Bus", "Mix Bus"],
  ["Lead 02 Bus", "Mix Bus"],
  ["Pad 01 Bus", "Mix Bus"],
  ["Pad 02 Bus", "Mix Bus"],
  ["Drums Bus", "Mix Bus"],
  ["Bass Bus", "Mix Bus"],
  ["Mix Bus", "Master Out"],
  ["Master Out", "Stereo Out"],
  ["Reverb 1", "Mix Bus"],
];

const aeroRose =
  "linear-gradient(100deg, #d9c9d8 0, #cfbfd0 14%, #b9a6bb 26%, #c3b0c4 45%, #cbbacb 66%, #b7a3b6 75%, #d6c8d6 80%, #d9ccd9) top / 100% 33px no-repeat, linear-gradient(#d9ccd9, #ece5ec 130px, #b7a4b9 131px, #c6b5c8)";
const aeroPale = "linear-gradient(#e6dde5, #d9cfd9 4%, #c7bdc7 40%, #d6ccd6 60%, #cbc1cc 80%, #d8ced8)";

function Connections() {
  return (
    <Window $x={576} $y={102} $w={833} $h={441} $pad={5} $bg={aeroRose}>
      <TitleBar $h={32}>
        <Brand s={27} />
        <Title $center>VST Connections - Group/FX</Title>
        <WinButtons>
          <WinButton $w={34} aria-label="Minimize"><svg width="17" height="6" viewBox="0 0 17 6"><rect x="0.500" y="0.500" width="16" height="4" fill="#fff" stroke="#5a5560" /></svg></WinButton>
          <WinButton $w={33} aria-label="Maximize"><svg width="17" height="14" viewBox="0 0 17 14"><path fillRule="evenodd" d="M0.500 0.500H16.500V13.500H0.500Z M4.500 4.500V9.500H12.500V4.500Z" fill="#fff" stroke="#5a5560" /></svg></WinButton>
          <WinButton $w={59} $red aria-label="Close"><XMark /></WinButton>
        </WinButtons>
      </TitleBar>
      <GrayPane>
        <VTabs>
          {["Inputs", "Outputs", "Group/FX", "External FX", "External Instruments", "Studio"].map((t) => (
            <VTab key={t} $on={t === "Group/FX"}>{t}</VTab>
          ))}
        </VTabs>
        <AddRow>
          <TreeAll><Box plus /><Box />All</TreeAll>
          <AddKey>Add Group</AddKey>
          <AddKey>Add FX</AddKey>
        </AddRow>
        <TableFrame>
          <BusTable>
            <colgroup><col width="161" /><col width="80" /><col /></colgroup>
            <thead><tr><th>Bus Name</th><th>Speakers</th><th>Output Routing</th></tr></thead>
            <tbody>
              {buses.map(([name, out], i) => (
                <tr key={name}>
                  <td>
                    <BusName>
                      <Tree last={i === 9} />
                      <IconSlot>{i === 9 ? <ReturnArrow /> : <Fork />}</IconSlot>
                      {name}
                    </BusName>
                  </td>
                  <td>Stereo</td>
                  <td>{out}</td>
                </tr>
              ))}
            </tbody>
            <tfoot><tr><td /><td /><td /></tr></tfoot>
          </BusTable>
          <VBar>
            <BarKey aria-label="Scroll up"><Chevron d="M1 7L5 3L9 7" /></BarKey>
            <BarKey aria-label="Scroll down"><Chevron d="M1 3L5 7L9 3" /></BarKey>
          </VBar>
          <HBar>
            <BarKey aria-label="Scroll left"><Chevron d="M7 1L3 5L7 9" /></BarKey>
            <Thumb />
            <BarKey $push aria-label="Scroll right"><Chevron d="M3 1L7 5L3 9" /></BarKey>
          </HBar>
        </TableFrame>
      </GrayPane>
    </Window>
  );
}

/* ---------- control room ---------- */

const DarkPane = styled.div`
  flex: 1;
  display: flex;
  flex-direction: column;
  padding: 4px 4px 3px 3px;
  border: 1px solid #f2eaf0;
  background: #0b0d0e;
  min-height: 0;
`;
const RoomBody = styled.div`
  position: relative;
  flex: 1;
  display: flex;
  flex-direction: column;
  padding: 8px 7px 0;
  border: 2px solid ${line};
  border-radius: 0 7px 0 7px;
  background: ${panel};
`;
const RoomScroll = styled.i`
  position: absolute;
  top: 8px;
  right: -2px;
  width: 6px;
  height: 427px;
  border-radius: 4px 0 0 4px;
  background: #717981;
`;
const RoomBar = styled.div<{ $after: number; $light?: boolean }>`
  display: flex;
  align-items: center;
  gap: 5px;
  flex: none;
  height: 23px;
  margin-bottom: ${(p) => p.$after}px;
  padding: 0 4px 0 3px;
  border: 1px solid #15181a;
  border-radius: 4px;
  background: ${(p) => (p.$light ? "linear-gradient(#a5a8aa 45%, #8c8f92 50%)" : "linear-gradient(#93969a 45%, #7d8084 50%)")};
  color: #fafbfb;
  font-size: 12px;
  small { margin-left: auto; font-size: 11px; }
`;
const PowerKey = styled.button<{ $on?: boolean }>`
  width: 23px;
  height: 15px;
  display: grid;
  place-items: center;
  border: 1px solid #15181a;
  border-radius: 3px;
  background: ${(p) => (p.$on ? "linear-gradient(#4f96d8,#2667a8)" : "linear-gradient(#8492a1,#667483)")};
`;
const Slots = styled.div`
  border-bottom: 1px solid #4c4f50;
`;
const Slot = styled.div<{ $full?: boolean }>`
  height: 25px;
  padding: 2px 0 3px;
  border-top: 1px solid #4c4f50;
  span {
    display: block;
    height: 19px;
    padding: 0 4px;
    border: 1px solid ${(p) => (p.$full ? "#56626e" : "#525d69")};
    border-radius: 2px;
    background: ${(p) => (p.$full ? "linear-gradient(#55606c,#4a5662)" : "#464c57")};
    color: #98a3ad;
    font-size: 13px;
    line-height: 18px;
  }
`;
const Segs = styled.div<{ $cols: string; $after: number }>`
  display: grid;
  grid-template-columns: ${(p) => p.$cols};
  gap: 2px;
  flex: none;
  height: 30px;
  margin: 0 4px ${(p) => p.$after}px 0;
  padding: 2px;
  border: 1px solid #6d7378;
  border-radius: 4px;
  background: #101315;
`;
const Seg = styled.button<{ $c?: "o" | "b" }>`
  border-radius: 2px;
  background: ${(p) =>
    p.$c === "o"
      ? "linear-gradient(#dba777, #c9843f 48%, #9c6128 52%, #a96c30)"
      : p.$c === "b"
        ? "linear-gradient(#7db1e3, #4789ca 48%, #24609e 52%, #2e6cab)"
        : "linear-gradient(#a3a8aa, #9da2a4 48%, #858b8d 52%, #8c9193)"};
  color: #0d0f10;
  font-weight: 600;
`;
const KnobArea = styled.div`
  display: flex;
  justify-content: space-between;
  align-items: center;
  height: 96px;
  margin: 0 4px 4px 6px;
`;
const RoundKeys = styled.div`
  display: flex;
  flex-direction: column;
  gap: 7px;
`;
const RoundKey = styled.button<{ $blue?: boolean }>`
  width: 27px;
  height: 27px;
  display: grid;
  place-items: center;
  border: 2px solid #1c1f21;
  outline: 1px solid #6d7378;
  outline-offset: -1px;
  border-radius: 14px;
  background: ${(p) => (p.$blue ? "linear-gradient(#5fa0dc, #4285c6 48%, #24609e 52%)" : "linear-gradient(#a3a8aa 48%, #868c8e 52%)")};
  color: #1c1f21;
  font-size: 10px;
  font-weight: 700;
`;
const KnobBox = styled.label`
  display: grid;
  margin: 0 22px 0 36px;
  > * { grid-area: 1 / 1; }
  input { width: 84px; height: 84px; opacity: 0; }
`;

function Knob() {
  return (
    <KnobBox>
      <svg width="84" height="84" viewBox="-42 -42 84 84">
        <defs>
          <linearGradient id="cap" x1="0" y1="0" x2="0.700" y2="1">
            <stop offset="0" stopColor="#bd5a5f" />
            <stop offset="0.500" stopColor="#973439" />
            <stop offset="1" stopColor="#55191d" />
          </linearGradient>
          <radialGradient id="shade">
            <stop offset="0.700" stopColor="#000" stopOpacity="0.700" />
            <stop offset="1" stopColor="#000" stopOpacity="0" />
          </radialGradient>
        </defs>
        {Array.from({ length: 13 }, (_, i) => (
          <path key={i} d="M0 -34V-40" stroke="#7a8187" strokeWidth="1.500" transform={`rotate(${-135 + i * 22.5})`} />
        ))}
        <path d="M-24.400 24.400A34.500 34.500 0 1 1 24.400 24.400" fill="none" stroke="#7a8187" />
        <circle cx="4" cy="6" r="33" fill="url(#shade)" />
        <circle r="27.500" fill="#9a9ea0" stroke="#a8acae" strokeWidth="3" />
        <circle r="28" fill="none" stroke="#b3b7b9" strokeWidth="4" strokeDasharray="7.500 3.500" />
        <circle r="25" fill="#111" />
        <circle r="23.500" fill="url(#cap)" />
        <path d="M11.500 -9.500L17 -14.500" stroke="#f3dfe0" strokeWidth="3" />
        <text x="0" y="5" textAnchor="middle" fontSize="11" fontWeight="600" fill="#e2c6c8">-3.00</text>
      </svg>
      <input type="range" aria-label="Control room level" min={-60} max={6} defaultValue={-3} />
    </KnobBox>
  );
}

const LowTabs = styled.div`
  display: flex;
  flex: none;
  height: 20px;
`;
const LowTab = styled.button`
  position: relative;
  flex: 1;
  height: 22px;
  margin-top: -2px;
  border: 2px solid ${line};
  border-top: 0;
  border-radius: 0 0 7px 2px;
  background: ${panel};
  color: #dde1e4;
  font-weight: 600;
`;
const DarkTab = styled.button`
  width: 121px;
  height: 18px;
  color: #b0b5b8;
  font-weight: 600;
`;

function ControlRoom() {
  return (
    <Window $x={1515} $y={92} $w={267} $h={795} $pad={7} $bg={aeroPale}>
      <TitleBar $h={34}>
        <Brand s={20} />
        <Title>Control Room Mixer - ...</Title>
        <WinButtons><WinButton $w={57} $clear aria-label="Close"><XMark /></WinButton></WinButtons>
      </TitleBar>
      <DarkPane>
        <Tabs>
          <Tab $on $w={123}>Control Room</Tab>
          <Tab $w={119}>Meter</Tab>
        </Tabs>
        <RoomBody>
          <RoomScroll />
          <RoomBar $after={12}><PowerKey aria-label="Cue 1 power"><Power /></PowerKey>Cue 1<small>stereo</small></RoomBar>
          <RoomBar $after={6} $light>Monitors</RoomBar>
          <Slots>
            <Slot $full><span>REVelation</span></Slot>
            {Array.from({ length: 5 }, (_, i) => <Slot key={i}><span /></Slot>)}
          </Slots>
          <Space $h={26} />
          <RoomBar $after={10} $light><PowerKey $on aria-label="Main power"><Power /></PowerKey>Main<small>stereo</small></RoomBar>
          <Segs $cols="1fr 1fr" $after={6}><Seg $c="o">Mix</Seg><Seg>C 1</Seg></Segs>
          <KnobArea>
            <RoundKeys>
              <RoundKey>Dim</RoundKey>
              <RoundKey aria-label="Reference level"><svg width="12" height="6" viewBox="0 0 12 6"><path d="M0 0L7 3L0 6Z M9 2H11V4H9Z" fill="#111" /></svg></RoundKey>
              <RoundKey $blue aria-label="Click"><svg width="14" height="14" viewBox="0 0 14 14"><path fillRule="evenodd" d="M1 13.500L5 2H8.500L7 7.500H9L10.500 13.500Z M5 10.500H8V9H5.500Z" fill="#0c141c" /><circle cx="10.500" cy="3" r="2" fill="#0c141c" /></svg></RoundKey>
            </RoundKeys>
            <Knob />
            <Meter w={37} h={94} marks={[[8, "0"], [31, "12"], [54, "24"], [77, "40"]]} />
          </KnobArea>
          <Segs $cols="70fr 96fr 46fr" $after={7}><Seg $c="b">A</Seg><Seg>Stereo</Seg><Seg>1</Seg></Segs>
          <div>{Array.from({ length: 8 }, (_, i) => <Slot key={i}><span /></Slot>)}</div>
        </RoomBody>
        <LowTabs>
          <DarkTab>Mixer</DarkTab>
          <LowTab>Setup</LowTab>
        </LowTabs>
      </DarkPane>
    </Window>
  );
}

/* ---------- right zone ---------- */

const RackBar = styled.div`
  display: flex;
  justify-content: flex-end;
  padding: 8px 0 9px;
`;
const RackKey = styled.button`
  width: 11px;
  height: 22px;
  padding-left: 4px;
  border: 1px solid #26292c;
  border-radius: 3px 0 0 3px;
  background: #b1b4b8;
  overflow: hidden;
`;
const RackSlot = styled.div`
  height: 23px;
  border-bottom: 1px solid #81888e;
  background: #4d555d;
`;

export default function App() {
  return (
    <Desktop>
      <GlobalStyle />
      <InfoLine>
        <InfoItem>Record Time Max<b>1372 hours 31 mins</b></InfoItem>
        <InfoItem>Record Format<b>48 kHz - 32 Bit</b></InfoItem>
        <InfoItem>Project Frame Rate<b>30 fps</b></InfoItem>
        <InfoItem>Project Pan Law<b>Equal Power</b></InfoItem>
      </InfoLine>
      <StatusLine>Object Selected</StatusLine>
      <Main>
        <Inspector />
        <Column>
          <Panel $grow>
            <Project>
              <Tracks />
              <TimelineView />
            </Project>
          </Panel>
          <Space $h={4} />
          <Panel><MixConsole /></Panel>
          <Footer>
            <CloseMark aria-label="Close zone"><svg width="10" height="9" viewBox="0 0 10 9"><path d="M1 0L9 9 M9 0L1 9" stroke="#c3c7ca" strokeWidth="2.200" /></svg></CloseMark>
            <Tab $on $low $w={103}>MixConsole</Tab>
            <Tab $w={70}>Editor</Tab>
            <Tab $w={128}>Sampler Control</Tab>
            <Tab $w={98}>Chord Pads</Tab>
            <CloseMark aria-label="Zone setup"><Gear c="#a4a9ad" s={13} /></CloseMark>
          </Footer>
        </Column>
        <Column>
          <Tabs>
            <Tab $on $w={129}>VST Instruments</Tab>
            <Tab $w={94}>MediaBay</Tab>
          </Tabs>
          <Panel $grow $edge>
            <RackBar><RackKey aria-label="Rack options"><svg width="10" height="10" viewBox="0 0 10 10"><path d="M0 5L5 0L10 5H7V10H3V5Z" fill="#0b0d0e" /></svg></RackKey></RackBar>
            <RackSlot />
          </Panel>
        </Column>
      </Main>
      <Connections />
      <ControlRoom />
    </Desktop>
  );
}
